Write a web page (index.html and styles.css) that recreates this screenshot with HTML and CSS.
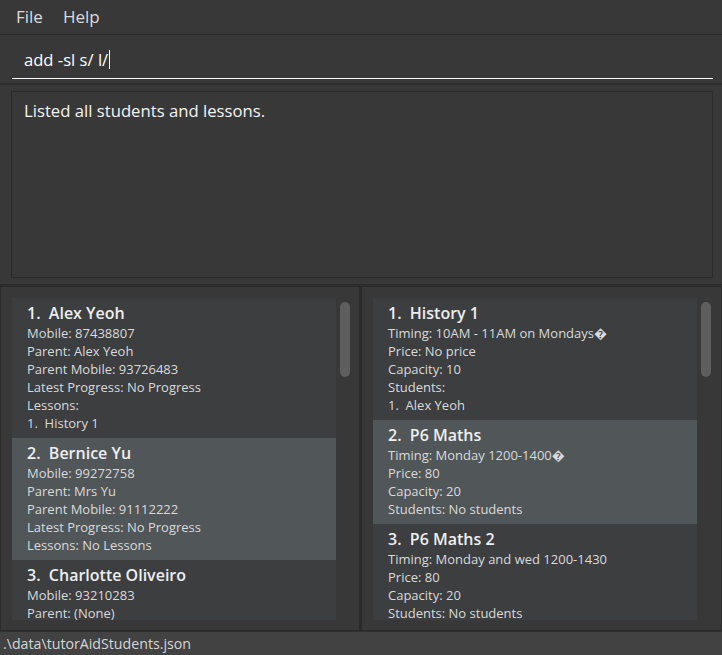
FILE: index.html
```html
<!DOCTYPE html>
<html>
<head>
<meta charset="utf-8">
<link rel="stylesheet" href="styles.css">
</head>
<body>
<div class="app">
  <div class="menubar"><span class="menu">File</span><span class="menu">Help</span></div>
  <div class="command">
    <div class="cmd-field"><span class="cmd-text">add -sl s/ l/</span><span class="caret"></span></div>
  </div>
  <div class="result">
    <div class="result-box">Listed all students and lessons.</div>
  </div>
  <div class="lists">
    <div class="pane pane-left">
      <div class="list">
        <div class="card">
          <div class="title">1.&nbsp;&nbsp;Alex Yeoh</div>
          <div class="line">Mobile: 87438807</div>
          <div class="line">Parent: Alex Yeoh</div>
          <div class="line">Parent Mobile: 93726483</div>
          <div class="line">Latest Progress: No Progress</div>
          <div class="line">Lessons:</div>
          <div class="line">1.&nbsp;&nbsp;History 1</div>
        </div>
        <div class="card selected">
          <div class="title">2.&nbsp;&nbsp;Bernice Yu</div>
          <div class="line">Mobile: 99272758</div>
          <div class="line">Parent: Mrs Yu</div>
          <div class="line">Parent Mobile: 91112222</div>
          <div class="line">Latest Progress: No Progress</div>
          <div class="line">Lessons: No Lessons</div>
        </div>
        <div class="card">
          <div class="title">3.&nbsp;&nbsp;Charlotte Oliveiro</div>
          <div class="line">Mobile: 93210283</div>
          <div class="line">Parent: (None)</div>
        </div>
      </div>
      <div class="scrollbar"><div class="thumb"></div></div>
    </div>
    <div class="pane pane-right">
      <div class="list">
        <div class="card">
          <div class="title">1.&nbsp;&nbsp;History 1</div>
          <div class="line">Timing: 10AM - 11AM on Mondays&#xFFFD;</div>
          <div class="line">Price: No price</div>
          <div class="line">Capacity: 10</div>
          <div class="line">Students:</div>
          <div class="line">1.&nbsp;&nbsp;Alex Yeoh</div>
        </div>
        <div class="card selected">
          <div class="title">2.&nbsp;&nbsp;P6 Maths</div>
          <div class="line">Timing: Monday 1200-1400&#xFFFD;</div>
          <div class="line">Price: 80</div>
          <div class="line">Capacity: 20</div>
          <div class="line">Students: No students</div>
        </div>
        <div class="card">
          <div class="title">3.&nbsp;&nbsp;P6 Maths 2</div>
          <div class="line">Timing: Monday and wed 1200-1430</div>
          <div class="line">Price: 80</div>
          <div class="line">Capacity: 20</div>
          <div class="line">Students: No students</div>
        </div>
      </div>
      <div class="scrollbar"><div class="thumb"></div></div>
    </div>
  </div>
  <div class="status">.\data\tutorAidStudents.json</div>
</div>
</body>
</html>
```

FILE: styles.css
```css
html, body {
  margin: 0;
  padding: 0;
  background: #383838;
}
body {
  font-family: "Open Sans", "Noto Sans", sans-serif;
  color: #ffffff;
}
.app {
  width: 722px;
  height: 655px;
  display: flex;
  flex-direction: column;
  overflow: hidden;
}
.menubar {
  height: 35px;
  border-bottom: 1px solid #2b2b2b;
  display: flex;
  align-items: center;
  padding-left: 16px;
  gap: 20px;
  box-sizing: border-box;
}
.menu {
  font-size: 17px;
  color: #dcdcdc;
  padding-bottom: 1px;
}
.command {
  height: 50px;
  box-sizing: border-box;
  border-bottom: 2px solid #2e2e2e;
  padding: 9px 9px 0 12px;
}
.cmd-field {
  height: 35px;
  box-sizing: border-box;
  border-bottom: 1px solid #ffffff;
  display: flex;
  align-items: center;
  padding-left: 12px;
  padding-bottom: 3px;
}
.cmd-text {
  font-size: 16.6px;
  color: #ffffff;
}
.caret {
  width: 1px;
  height: 19px;
  background: #ffffff;
  margin-left: 1px;
}
.result {
  height: 200px;
  box-sizing: border-box;
  padding: 6px 9px 6px 11px;
  border-bottom: 1px solid #2b2b2b;
}
.result-box {
  height: 100%;
  box-sizing: border-box;
  border: 1px solid #2a2a2a;
  padding: 7px 12px;
  font-size: 16.7px;
  color: #f4f4f4;
}
.lists {
  flex: 1;
  display: flex;
  min-height: 0;
  border-top: 1px solid #2f2f2f;
}
.pane {
  display: flex;
  box-sizing: border-box;
  border: 1px solid #2b2b2b;
  padding: 11px 0 10px 0;
}
.pane-left {
  width: 361px;
  padding-left: 11px;
  border-right: 2px solid #2a2a2a;
}
.pane-right {
  flex: 1;
  padding-left: 11px;
}
.list {
  width: 324px;
  overflow: hidden;
  background: #3c3e40;
}
.card {
  background: #3c3e40;
  padding: 4px 0 6px 15px;
  color: #d8d8d8;
}
.card.selected {
  background: #515658;
}
.title {
  font-size: 16px;
  font-weight: 600;
  line-height: 22px;
  color: #eeeeee;
}
.line {
  font-size: 13px;
  line-height: 18px;
  color: #dadada;
}
.scrollbar {
  width: 10px;
  margin-left: 4px;
  padding-top: 4px;
}
.thumb {
  width: 10px;
  height: 75px;
  border-radius: 5px;
  background: #5e5e5e;
}
.status {
  height: 24px;
  background: #424242;
  font-size: 14.2px;
  color: #d6d6d6;
  line-height: 24px;
  padding-left: 3px;
  border-top: 1px solid #2e2e2e;
  box-sizing: border-box;
}
```
